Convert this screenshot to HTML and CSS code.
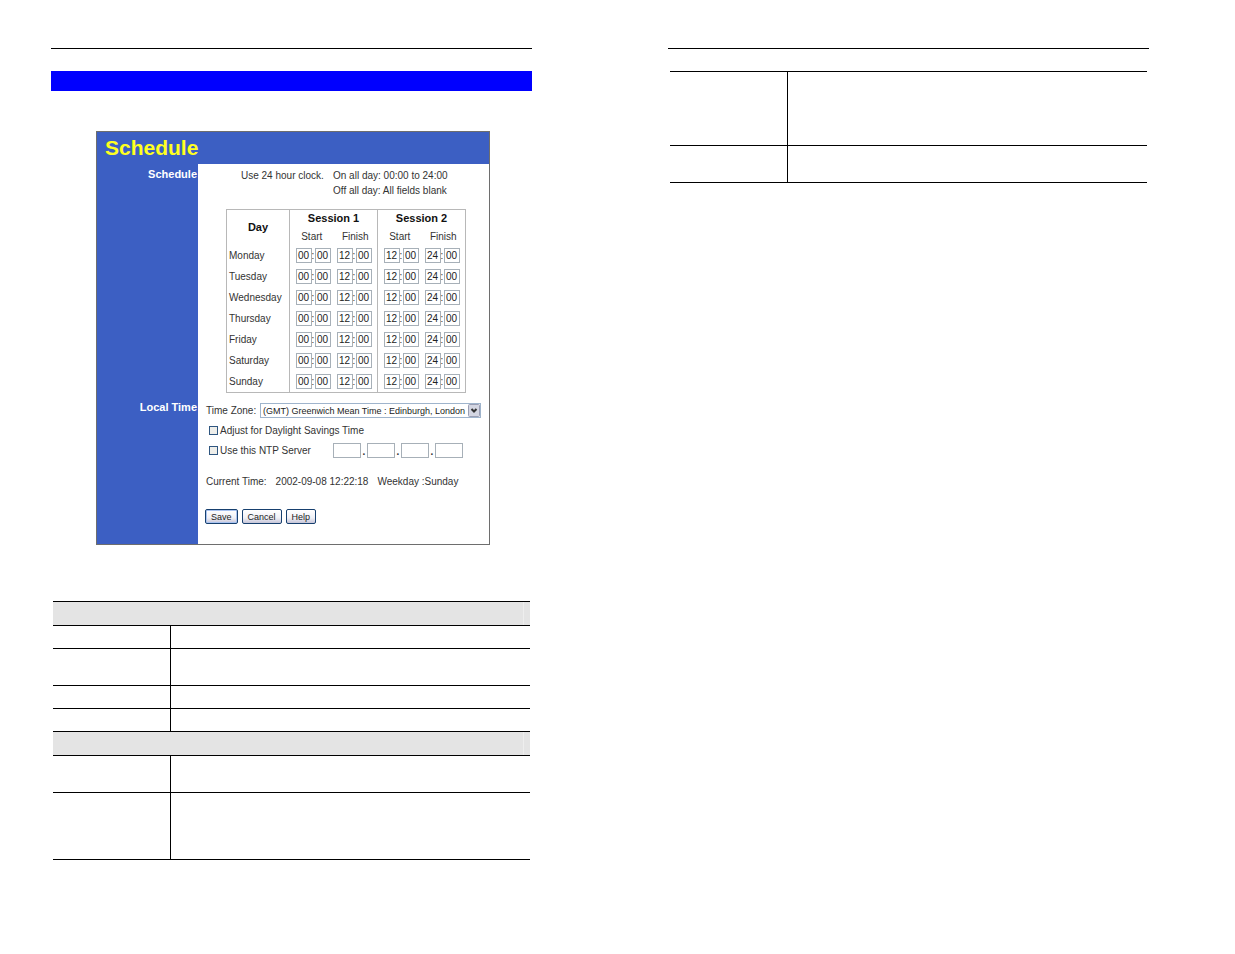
FILE: index.html
```html
<!DOCTYPE html>
<html lang="en">
<head>
    <meta charset="UTF-8">
    <meta name="viewport" content="width=device-width, initial-scale=1.0">
    <title>Schedule</title>
    <link rel="stylesheet" href="styles.css">
</head>
<body>
    <div class="spread">
        <div class="page">
            <div class="title-bar"></div>

            <form class="panel" id="scheduleForm">
                <h1>Schedule</h1>
                <section class="section">
                    <h2>Schedule</h2>
                    <div class="content">
                        <div class="note">
                            <span>Use 24 hour clock.</span>
                            <span>On all day: 00:00 to 24:00<br>Off all day: All fields blank</span>
                        </div>
                        <table class="sessions">
                            <thead>
                                <tr>
                                    <th rowspan="2" class="day">Day</th>
                                    <th colspan="2" class="session">Session 1</th>
                                    <th colspan="2" class="session">Session 2</th>
                                </tr>
                                <tr class="sub">
                                    <th>Start</th>
                                    <th>Finish</th>
                                    <th>Start</th>
                                    <th>Finish</th>
                                </tr>
                            </thead>
                            <tbody id="days"></tbody>
                        </table>
                    </div>
                </section>

                <section class="section">
                    <h2>Local Time</h2>
                    <div class="content local">
                        <div class="row zone">
                            <label for="timeZone">Time Zone:</label>
                            <div class="select-box">
                                <select id="timeZone">
                                    <option>(GMT) Greenwich Mean Time : Edinburgh, London</option>
                                </select>
                                <svg class="arrow" width="12" height="13" viewBox="0 0 12 13">
                                    <rect x="0.5" y="0.5" width="11" height="12" rx="1" fill="#d4d6e2" stroke="#9a9eb4"/>
                                    <path d="M3.5 5 L6 7.5 L8.5 5" fill="none" stroke="#333" stroke-width="2"/>
                                </svg>
                            </div>
                        </div>
                        <div class="row check">
                            <input type="checkbox" id="daylight">
                            <label for="daylight">Adjust for Daylight Savings Time</label>
                        </div>
                        <div class="row check">
                            <input type="checkbox" id="ntp">
                            <label for="ntp" class="ntp-label">Use this NTP Server</label>
                            <div class="address">
                                <input type="text" aria-label="Address part 1"><span>.</span>
                                <input type="text" aria-label="Address part 2"><span>.</span>
                                <input type="text" aria-label="Address part 3"><span>.</span>
                                <input type="text" aria-label="Address part 4">
                            </div>
                        </div>
                        <div class="row current">
                            <span>Current Time:</span>
                            <span>2002-09-08 12:22:18</span>
                            <span>Weekday :Sunday</span>
                        </div>
                        <div class="buttons">
                            <button type="button" class="save">Save</button>
                            <button type="button">Cancel</button>
                            <button type="button">Help</button>
                        </div>
                    </div>
                </section>
            </form>

            <table class="data">
                <colgroup><col class="name-col"><col></colgroup>
                <tr class="heading"><th colspan="2"></th></tr>
                <tr><td class="name"></td><td></td></tr>
                <tr class="two-lines"><td class="name"></td><td></td></tr>
                <tr><td class="name"></td><td></td></tr>
                <tr><td class="name"></td><td></td></tr>
                <tr class="heading"><th colspan="2"></th></tr>
                <tr class="two-lines"><td class="name"></td><td></td></tr>
                <tr class="four-lines"><td class="name"></td><td></td></tr>
            </table>
        </div>

        <div class="page">
            <table class="data">
                <colgroup><col class="name-col"><col></colgroup>
                <tr class="five-lines"><td class="name"></td><td></td></tr>
                <tr class="two-lines"><td class="name"></td><td></td></tr>
            </table>
        </div>
    </div>

    <script src="script.js"></script>
</body>
</html>
```

FILE: styles.css
```css
body {
    margin: 0;
    background-color: #ffffff;
    font-family: "Liberation Sans", Arial, sans-serif;
    font-size: 10px;
    line-height: 15px;
    color: #333333;
}

.spread {
    display: grid;
    grid-template-columns: 1fr 1fr;
    gap: 136px;
    padding: 48px 86px 94px 51px;
}

.page {
    border-top: 1px solid #000000;
    padding-top: 22px;
}

.title-bar {
    height: 20px;
    background-color: #0000ff;
}

/* settings panel */
.panel {
    margin: 40px 42px 56px 45px;
    border: 1px solid #6e6e6e;
}

h1 {
    margin: 0;
    padding: 4px 8px;
    background-color: #3c5fc3;
    color: #ffff20;
    font-size: 21px;
    line-height: 24px;
}

h2 {
    margin: 0;
    padding: 2px 1px;
    background-color: #3c5fc3;
    color: #ffffff;
    font-size: 11px;
    line-height: 16px;
    text-align: right;
}

.section {
    display: grid;
    grid-template-columns: 101px 1fr;
}

.content {
    padding: 4px 8px;
}

.note {
    display: grid;
    grid-template-columns: 92px 1fr;
    padding-left: 35px;
}

.sessions {
    margin: 11px 0 0 20px;
    border-collapse: collapse;
    border: 1px solid #b8b8b8;
    font-size: 10px;
}

.sessions th,
.sessions td {
    padding: 0;
}

.sessions th {
    height: 17px;
    color: #111111;
    font-size: 11px;
}

.sessions .sub th {
    height: 18px;
    font-size: 10px;
    font-weight: normal;
    color: #333333;
}

.sessions .day {
    width: 62px;
}

.sessions .session {
    width: 87px;
}

.sessions .day,
.sessions .session,
.sessions .name,
.sessions .start,
.sub th:nth-child(odd) {
    border-left: 1px solid #b8b8b8;
}

.sessions tbody td {
    height: 21px;
}

.sessions .name {
    padding-left: 2px;
}

.time {
    display: flex;
    align-items: center;
    padding: 0 3px;
}

.start .time {
    justify-content: flex-end;
}

.time span {
    width: 3px;
}

input[type="text"] {
    box-sizing: border-box;
    height: 15px;
    margin: 0;
    padding: 0;
    border: 1px solid #a7b0b8;
    background-color: #ffffff;
    color: #222222;
    font-family: inherit;
    font-size: 10px;
    text-align: center;
}

.time input[type="text"] {
    width: 16px;
}

/* local time */
.local {
    padding-bottom: 20px;
}

.row {
    display: flex;
    align-items: center;
    height: 20px;
    white-space: nowrap;
}

.zone {
    justify-content: space-between;
    height: 19px;
}

.select-box {
    position: relative;
    width: 221px;
    height: 15px;
}

select {
    display: block;
    box-sizing: border-box;
    width: 100%;
    height: 15px;
    padding: 0 12px 0 2px;
    appearance: none;
    border: 1px solid #9fb4cc;
    border-radius: 0;
    background-color: #ffffff;
    color: #222222;
    font-family: inherit;
    font-size: 9px;
}

.arrow {
    position: absolute;
    top: 1px;
    right: 1px;
}

.check {
    padding-left: 3px;
}

input[type="checkbox"] {
    box-sizing: border-box;
    width: 9px;
    height: 9px;
    margin: 0 2px 0 0;
    appearance: none;
    border: 1px solid #2f5680;
    background-color: #eeeeea;
}

.ntp-label {
    width: 113px;
}

.address {
    display: flex;
    align-items: flex-end;
}

.address input[type="text"] {
    width: 28px;
}

.address span {
    width: 6px;
    line-height: 12px;
    text-align: center;
    font-weight: bold;
}

.current {
    gap: 9px;
    margin-top: 11px;
}

.buttons {
    display: flex;
    gap: 4px;
    margin-top: 18px;
    margin-left: -1px;
}

button {
    height: 15px;
    padding: 0 5px;
    border: 1px solid #17406f;
    border-radius: 2px;
    background: linear-gradient(#ffffff, #f0f0f6 60%, #c6c5d8);
    color: #222222;
    font-family: inherit;
    font-size: 9px;
    line-height: 12px;
}

.save {
    box-shadow: inset 0 0 0 1px #a9c3f0;
}

/* ruled tables */
.data {
    width: calc(100% - 4px);
    margin-left: 2px;
    border-spacing: 0;
    border-top: 1px solid #000000;
    table-layout: fixed;
}

.name-col {
    width: 118px;
}

.data td,
.data th {
    box-sizing: border-box;
    height: 23px;
    padding: 0;
    border-bottom: 1px solid #000000;
}

.data th {
    height: 24px;
    background: linear-gradient(#eeeeee, #eeeeee) right 6px top / 1px 100% no-repeat, #e4e4e4;
}

.data .name {
    border-right: 1px solid #000000;
}

.data .two-lines td {
    height: 37px;
}

.data .four-lines td {
    height: 67px;
}

.data .five-lines td {
    height: 74px;
}
```

FILE: script.js
```js
const days = ['Monday', 'Tuesday', 'Wednesday', 'Thursday', 'Friday', 'Saturday', 'Sunday'];
const times = [
    { name: 'Session 1 start', hour: '00' },
    { name: 'Session 1 finish', hour: '12' },
    { name: 'Session 2 start', hour: '12' },
    { name: 'Session 2 finish', hour: '24' }
];

// One row per day, each with four hour:minute pairs
document.getElementById('days').innerHTML = days.map(day => `
    <tr>
        <td class="name">${day}</td>
        ${times.map((time, i) => `
            <td class="${i % 2 === 0 ? 'start' : 'finish'}">
                <div class="time">
                    <input type="text" value="${time.hour}" aria-label="${day} ${time.name} hour"><span>:</span>
                    <input type="text" value="00" aria-label="${day} ${time.name} minute">
                </div>
            </td>`).join('')}
    </tr>`).join('');
```
